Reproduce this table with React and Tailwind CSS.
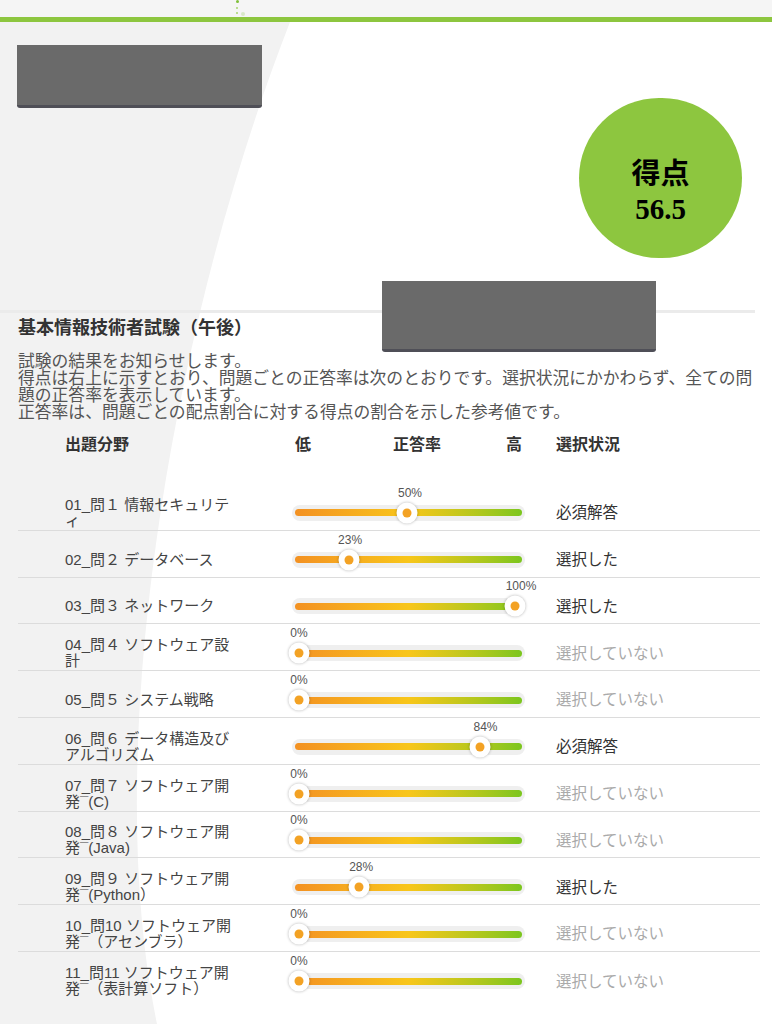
const rows = [
  { label: ['01_問１ 情報セキュリテ', 'ィ'], pct: 50, status: '必須解答' },
  { label: ['02_問２ データベース'], pct: 23, status: '選択した' },
  { label: ['03_問３ ネットワーク'], pct: 100, status: '選択した' },
  { label: ['04_問４ ソフトウェア設', '計'], pct: 0, status: '選択していない' },
  { label: ['05_問５ システム戦略'], pct: 0, status: '選択していない' },
  { label: ['06_問６ データ構造及び', 'アルゴリズム'], pct: 84, status: '必須解答' },
  { label: ['07_問７ ソフトウェア開', '発¯(C)'], pct: 0, status: '選択していない' },
  { label: ['08_問８ ソフトウェア開', '発¯(Java)'], pct: 0, status: '選択していない' },
  { label: ['09_問９ ソフトウェア開', '発¯(Python）'], pct: 28, status: '選択した' },
  { label: ['10_問10 ソフトウェア開', '発¯（アセンブラ）'], pct: 0, status: '選択していない' },
  { label: ['11_問11 ソフトウェア開', '発¯（表計算ソフト）'], pct: 0, status: '選択していない' },
]

const font = { fontFamily: '"Liberation Sans", "Noto Sans CJK JP", sans-serif' }

function Slider({ pct }) {
  const knob = 7 + pct * 2.16
  return (
    <div className="relative w-[233px] h-[16px] rounded-full bg-[#efefef] flex items-center px-[3px]">
      <div className="h-[7px] w-full rounded-full bg-linear-to-r from-[#f39122] via-[#f8c61a] to-[#7bc61e]" />
      <span
        className="absolute top-[-19px] text-[12px] leading-[14px] text-[#555] -translate-x-1/2 whitespace-nowrap"
        style={{ left: knob + pct * 0.06 }}
      >
        {pct}%
      </span>
      <div
        className="absolute top-1/2 w-[21px] h-[21px] -translate-x-1/2 -translate-y-1/2 rounded-full bg-white shadow-[0_0_3px_rgba(0,0,0,0.3)] flex items-center justify-center"
        style={{ left: knob }}
      >
        <div className="w-[9px] h-[9px] rounded-full bg-[#f3a224]" />
      </div>
    </div>
  )
}

function Redaction({ className }) {
  return (
    <div className={`bg-[#6a6a6a] border-b-[3px] border-[#4f4f57] rounded-b-[3px] ${className}`} />
  )
}

export default function App() {
  return (
    <div className="relative w-[772px] min-h-[1024px] bg-white overflow-hidden" style={font}>
      {/* background swoosh */}
      <svg className="absolute top-0 left-0" width="772" height="1024" viewBox="0 0 772 1024">
        <path d="M0 0 L290 0 L290 22 C170 330 100 750 157 1024 L0 1024 Z" fill="#f2f2f2" />
      </svg>

      <div className="relative">
        {/* top bar */}
        <div className="relative h-[17px] bg-[#f5f5f5]">
          <div className="absolute left-[236px] top-0 w-[3px] h-[3px] rounded-full bg-[#7fbf3a]" />
          <div className="absolute left-[236px] top-[7px] w-[2px] h-[2px] rounded-full bg-[#a6d46e]" />
          <div className="absolute left-[236px] top-[12px] w-[2px] h-[2px] rounded-full bg-[#a6d46e]" />
          <div className="absolute left-[241px] top-[12px] w-[4px] h-[4px] rounded-full bg-[#d8e8c8]" />
        </div>
        <div className="h-[5px] bg-[#8dc63f]" />

        {/* header */}
        <div className="flex items-start">
          <Redaction className="mt-[23px] ml-[17px] w-[245px] h-[63px]" />
          <div className="ml-auto mr-[30px] mt-[76px] w-[163px] h-[160px] rounded-full bg-[#8dc63f] flex flex-col items-center pt-[58px] text-black">
            <div className="text-[29px] leading-[30px] font-bold" style={{ fontFamily: '"Noto Sans CJK JP", sans-serif' }}>得点</div>
            <div className="text-[29px] leading-[30px] font-bold mt-[8px]" style={{ fontFamily: '"Liberation Serif", serif' }}>56.5</div>
          </div>
        </div>

        <div className="mt-[52px] w-[755px] h-[3px] bg-[#ebebeb]" />

        <div className="pl-[18px]">
          <h1 className="mt-[6px] text-[18px] leading-[18px] font-bold text-[#333]">基本情報技術者試験（午後）</h1>
          <div className="mt-[16px] text-[16.8px] leading-[17px] text-[#555] whitespace-nowrap">
            <div>試験の結果をお知らせします。</div>
            <div>得点は右上に示すとおり、問題ごとの正答率は次のとおりです。選択状況にかかわらず、全ての問</div>
            <div>題の正答率を表示しています。</div>
            <div>正答率は、問題ごとの配点割合に対する得点の割合を示した参考値です。</div>
          </div>

          {/* table header */}
          <div className="mt-[16px] flex items-center text-[16px] leading-[16px] font-bold text-[#333]">
            <div className="ml-[47px] w-[227px]">出題分野</div>
            <div className="w-[233px] flex items-center pl-[3px] pr-[3px]">
              <span>低</span>
              <span className="ml-[82px]">正答率</span>
              <span className="ml-auto">高</span>
            </div>
            <div className="ml-[31px]">選択状況</div>
          </div>

          {/* rows */}
          <div className="mt-[31px] w-[742px]">
            {rows.map((r, i) => (
              <div
                key={i}
                className={`h-[46.8px] pt-[12px] flex items-center ${i < rows.length - 1 ? 'border-b border-[#dcdcdc]' : ''}`}
              >
                <div className="ml-[47px] w-[227px] text-[15px] leading-[16px] text-[#444] whitespace-nowrap">
                  {r.label.map((l, j) => (
                    <div key={j}>{l}</div>
                  ))}
                </div>
                <Slider pct={r.pct} />
                <div
                  className={`ml-[31px] text-[15.5px] ${r.status === '選択していない' ? 'text-[#aaa]' : 'text-[#333]'}`}
                >
                  {r.status}
                </div>
              </div>
            ))}
          </div>
        </div>
      </div>

      <Redaction className="absolute left-[382px] top-[281px] w-[274px] h-[71px]" />
    </div>
  )
}
